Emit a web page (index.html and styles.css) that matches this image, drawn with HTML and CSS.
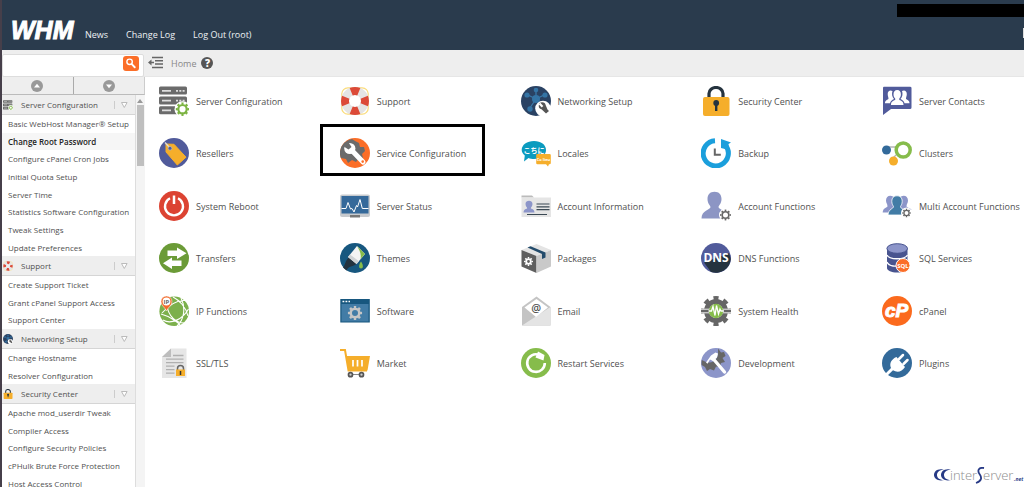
FILE: index.html
```html
<!DOCTYPE html>
<html lang="en">
<head>
<meta charset="utf-8">
<title>WHM</title>
<link rel="stylesheet" href="styles.css">
</head>
<body>
<header class="masthead">
  <svg class="logo" viewBox="0 0 70 28" role="img" aria-label="WHM"><text class="logo-text" x="1" y="23">WHM</text></svg>
  <nav class="topnav">
    <a href="#">News</a>
    <a href="#">Change Log</a>
    <a href="#">Log Out (root)</a>
  </nav>
  <div class="redacted"></div>
  <div class="edge-box"></div>
</header>
<div class="toolbar">
  <form class="search">
    <input class="search-input" type="text" aria-label="Search">
    <button class="search-button" type="button" aria-label="Find">
      <svg viewBox="0 0 16 16"><circle cx="6.5" cy="6.2" r="2.9" fill="none" stroke="#fff" stroke-width="1.5"/><path d="M8.8 8.6 12 12" stroke="#fff" stroke-width="2" stroke-linecap="round"/></svg>
    </button>
  </form>
  <button class="collapse" type="button" aria-label="Collapse menu">
    <svg viewBox="0 0 16 14"><path d="M4 1.500H15M7 4.800H15M7 8.100H15M4 11.500H15" stroke="#666" stroke-width="1.500"/><path d="M0 6.500 3.500 3.500V5.700H6V7.300H3.500V9.500Z" fill="#666"/></svg>
  </button>
  <a class="crumb" href="#">Home</a>
  <button class="help" type="button" aria-label="Help">?</button>
</div>
<div class="body">
  <aside class="sidebar">
    <div class="steppers">
      <button type="button" aria-label="Previous"><svg viewBox="0 0 12 12"><circle cx="6" cy="6" r="6" fill="#999"/><path d="M3 7.5 6 3.8 9 7.5Z" fill="#fff"/></svg></button>
      <button type="button" aria-label="Next"><svg viewBox="0 0 12 12"><circle cx="6" cy="6" r="6" fill="#999"/><path d="M3 4.5 6 8.2 9 4.5Z" fill="#fff"/></svg></button>
    </div>
    <div class="menu-wrap">
      <nav class="menu">
        <h2><svg class="mini" viewBox="0 0 30 30"><use href="#i-server"/></svg><span>Server Configuration</span><svg class="chev" viewBox="0 0 8 8"><path d="M1 1.5 3.8 6.5 6.6 1.5Z"/></svg></h2>
        <ul>
          <li><a href="#">Basic WebHost Manager® Setup</a></li>
          <li class="current"><a href="#">Change Root Password</a></li>
          <li><a href="#">Configure cPanel Cron Jobs</a></li>
          <li><a href="#">Initial Quota Setup</a></li>
          <li><a href="#">Server Time</a></li>
          <li><a href="#">Statistics Software Configuration</a></li>
          <li><a href="#">Tweak Settings</a></li>
          <li><a href="#">Update Preferences</a></li>
        </ul>
        <h2><svg class="mini" viewBox="0 0 30 30"><use href="#i-support"/></svg><span>Support</span><svg class="chev" viewBox="0 0 8 8"><path d="M1 1.5 3.8 6.5 6.6 1.5Z"/></svg></h2>
        <ul>
          <li><a href="#">Create Support Ticket</a></li>
          <li><a href="#">Grant cPanel Support Access</a></li>
          <li><a href="#">Support Center</a></li>
        </ul>
        <h2><svg class="mini" viewBox="0 0 30 30"><use href="#i-network"/></svg><span>Networking Setup</span><svg class="chev" viewBox="0 0 8 8"><path d="M1 1.5 3.8 6.5 6.6 1.5Z"/></svg></h2>
        <ul>
          <li><a href="#">Change Hostname</a></li>
          <li><a href="#">Resolver Configuration</a></li>
        </ul>
        <h2><svg class="mini" viewBox="0 0 30 30"><use href="#i-lock"/></svg><span>Security Center</span><svg class="chev" viewBox="0 0 8 8"><path d="M1 1.5 3.8 6.5 6.6 1.5Z"/></svg></h2>
        <ul>
          <li><a href="#">Apache mod_userdir Tweak</a></li>
          <li><a href="#">Compiler Access</a></li>
          <li><a href="#">Configure Security Policies</a></li>
          <li><a href="#">cPHulk Brute Force Protection</a></li>
          <li><a href="#">Host Access Control</a></li>
        </ul>
      </nav>
      <div class="scrollbar"><svg viewBox="0 0 6 4"><path d="M0 4 3 0 6 4Z" fill="#999"/></svg><div class="thumb"></div></div>
    </div>
  </aside>
  <main class="grid">
    <a class="item" href="#"><svg viewBox="0 0 30 30">
      <g id="i-server"><g fill="#6b6b6b"><rect x="0" y=".5" width="28" height="8" rx="1.5"/><rect x="0" y="10.5" width="28" height="8" rx="1.5"/><rect x="0" y="20.2" width="28" height="8" rx="1.5"/></g>
      <path d="M3 4.8H12M3 14.6H12M3 24.3H12" stroke="#ddd" stroke-width="1.7"/><path d="M17 4.8H26M17 14.6H26" stroke="#ddd" stroke-width="1.7" stroke-dasharray="2 1.3"/>
      <circle cx="23.5" cy="23.2" r="8" fill="#fff"/><circle cx="23.5" cy="23.2" r="4.2" fill="none" stroke="#7cb342" stroke-width="2.2"/><circle cx="23.5" cy="23.2" r="5.7" fill="none" stroke="#7cb342" stroke-width="2" pathLength="16" stroke-dasharray="1 1" stroke-dashoffset=".5"/></g></svg><span>Server Configuration</span></a>
    <a class="item" href="#"><svg viewBox="0 0 30 30">
      <g id="i-support"><rect x="1.8" y="1.8" width="26.4" height="26.4" rx="6" fill="none" stroke="#fadc7a" stroke-width="1.2"/><circle cx="15" cy="15" r="10" fill="none" stroke="#e4e4e4" stroke-width="8"/><circle cx="15" cy="15" r="10" fill="none" stroke="#dc4a38" stroke-width="8" pathLength="8" stroke-dasharray="1 1" stroke-dashoffset=".5"/></g></svg><span>Support</span></a>
    <a class="item" href="#"><svg viewBox="0 0 30 30">
      <g id="i-network"><circle cx="15" cy="15" r="15" fill="#2a4263"/><path d="M15 13V4.500M15 13 7 9M15 13 23 9M15 13 8.500 22.500M15 13 22 22" stroke="#3a78a8" stroke-width="1.300"/><g fill="#3474a5"><circle cx="15" cy="13" r="4"/><circle cx="15" cy="4" r="2.300"/><circle cx="6" cy="9" r="2.600"/><circle cx="24" cy="9" r="2.600"/><circle cx="9" cy="23" r="2.700"/></g><circle cx="22" cy="22.500" r="7.800" fill="#fff"/><path d="M25 27.500 20.500 23.200A3.500 3.500 0 1 1 24.700 19.200L26.500 23.500 28 25Z" fill="#555"/><path d="M18.500 17.500 21.500 20.700" stroke="#fff" stroke-width="2.200"/></g></svg><span>Networking Setup</span></a>
    <a class="item" href="#"><svg viewBox="0 0 30 30">
      <g id="i-lock"><path d="M8 13V7.500A7 6 0 0 1 22 7.500V13" fill="none" stroke="#25333f" stroke-width="3.200"/><rect x="2" y="11" width="26.500" height="19" rx="2" fill="#f5ae2b"/><circle cx="15.200" cy="17" r="2.900" fill="#25333f"/><path d="M14 17H16.400V25H14Z" fill="#25333f"/></g></svg><span>Security Center</span></a>
    <a class="item" href="#"><svg viewBox="0 0 30 30">
      <path d="M2 .7H28Q29.500.7 29.500 2V21.500Q29.500 23 28 23H9L1 29V2Q1 .7 2 .7Z" fill="#515b9b"/>
      <g fill="#fff"><path d="M11.500 8.500C11.500 5.600 12.800 4 15.200 4S18.900 5.600 18.900 8.500C18.900 10.500 18 11.700 17.300 12.500V14C20 15 21.500 15.800 21.500 19H9C9 15.800 10.500 15 13.200 14V12.500C12.300 11.700 11.500 10.500 11.500 8.500Z"/><path d="M10.500 5C8 3.500 5.700 5 5.700 8 5.700 10 6.500 11.300 6.500 13 5 14 3 14.300 3 17.300H8C8.500 15 10 14 12 13 10 11 9.500 7.500 10.500 5ZM20 5C22.500 3.500 24.800 5 24.800 8 24.800 10 24 11.300 24 13 25.500 14 27.500 14.300 27.500 17.300H22.500C22 15 20.500 14 18.500 13 20.500 11 21 7.500 20 5Z"/></g></svg><span>Server Contacts</span></a>

    <a class="item" href="#"><svg viewBox="0 0 30 30">
      <circle cx="15" cy="15" r="15" fill="#515b9b"/><path d="M7 6 15 6.300 27 19.200 18.300 27 7 14Z" fill="#f5ae2b" stroke="#f5ae2b" stroke-linejoin="round"/><path d="M6 4.500 11 10" stroke="#ddd" stroke-width="1.300"/><circle cx="11" cy="10.300" r="1.900" fill="#515b9b" stroke="#bbb" stroke-width=".7"/></svg><span>Resellers</span></a>
    <a class="item highlight" href="#"><svg viewBox="0 0 30 30">
      <circle cx="15" cy="15" r="15" fill="#fb6e28"/><path d="M4 5A15 15 0 0 1 12 1L15 3 19 5 20 9 24 9 25 13 22 16 23 20 19 20 16 24 12 22 8 25 6 21 .8 20A15 15 0 0 1 4 5Z" fill="#6b6b6b"/><path d="M9.500 10 23 24" stroke="#fff" stroke-width="5" stroke-linecap="round"/><circle cx="9.800" cy="10.500" r="5.600" fill="#fff"/><path d="M3 8 8 3.500 11.500 9 8.500 11.500Z" fill="#6b6b6b"/><circle cx="22.700" cy="23.600" r="1.300" fill="#fb6e28"/></svg><span>Service Configuration</span></a>
    <a class="item" href="#"><svg viewBox="0 0 30 30">
      <path d="M13 3C20 3 25 6.800 25 12S20 21 13 21C11 21 9 20.800 7.500 20L3 23.500 3.800 17.500C2 16 .7 14 .7 12 .7 6.800 6 3 13 3Z" fill="#0b9bbf"/><text x="13" y="15" text-anchor="middle" class="jp">こちに</text><path d="M16 16H28.500Q29.800 16 29.800 17.200V25Q29.800 26.200 28.500 26.200H28L27 28.500 25 26.200H16.500Q15.200 26.200 15.200 25V17.200Q15.200 16 16 16Z" fill="#f5ae2b"/><text x="22.500" y="23" text-anchor="middle" class="tiny">Co lieu</text></svg><span>Locales</span></a>
    <a class="item" href="#"><svg viewBox="0 0 30 30">
      <path d="M14 2.700A12.600 12.600 0 1 0 24.500 7.300" fill="none" stroke="#1b9fdc" stroke-width="5"/><path d="M20 1 30 4.500 27.500 6 28 12 20 10Z" fill="#1b9fdc"/><path d="M13.800 10.500V16.800H19.800" fill="none" stroke="#666" stroke-width="2"/></svg><span>Backup</span></a>
    <a class="item" href="#"><svg viewBox="0 0 30 30">
      <path d="M5 9H15M11 20 17 14" stroke="#b5b5b5" stroke-width="1.300"/><circle cx="4.500" cy="12" r="4.500" fill="#336a9a"/><circle cx="11.500" cy="23" r="4.500" fill="#f5ae2b"/><circle cx="21.200" cy="12" r="7" fill="#fff" stroke="#86bc4b" stroke-width="3.500"/></svg><span>Clusters</span></a>

    <a class="item" href="#"><svg viewBox="0 0 30 30">
      <circle cx="15" cy="15" r="15" fill="#dc4332"/><path d="M11 7.300A9 9 0 1 0 19 7.300" fill="none" stroke="#fff" stroke-width="2.300"/><path d="M15 4.500V13" stroke="#fff" stroke-width="2.500"/></svg><span>System Reboot</span></a>
    <a class="item" href="#"><svg viewBox="0 0 30 30">
      <rect y="3.500" width="30" height="22.500" rx="2" fill="#c7cace"/><rect x="1.500" y="5" width="27" height="17.500" fill="#35699a"/><path d="M10 24H20V26.500H10Z" fill="#777"/><path d="M1.500 17.500H6L8 11.500 10.500 18 12 17.500 14 21 16.500 14.500 17.500 16 20 8.500 22.300 17.500H28.500" fill="none" stroke="#fff" stroke-width="1"/></svg><span>Server Status</span></a>
    <a class="item" href="#"><svg viewBox="0 0 30 30">
      <path d="M.5 4.500H11L13 6.500H.5Z" fill="#bbb"/><path d="M.5 6.500H30V26H.5Z" fill="#e5e5e5"/><path d="M4.500 13C4.500 8.700 11.500 8.700 11.500 13 11.500 15.500 9.800 16 9.800 17.500 12 18 13.500 19 13.500 21.500H2.500C2.500 19 4 18 6.200 17.500 6.200 16 4.500 15.500 4.500 13Z" fill="#8c95c9"/><path d="M15.500 13H28.500M15.500 15.800H28.500M15.500 18.700H28.500M6 23.500H26" stroke="#3b4954" stroke-width="1.200"/></svg><span>Account Information</span></a>
    <a class="item" href="#"><svg viewBox="0 0 30 30">
      <path d="M6.500 8C6.500 3.500 9 .7 13.500.7S20.500 3.500 20.500 8C20.500 12.500 18 14 17.500 16 17.500 19 27 19 27 27.500H.5C.5 19 9.500 19 9.500 16 9 14 6.500 12.500 6.500 8Z" fill="#8c95c4"/><circle cx="24.500" cy="24" r="6.500" fill="#fff"/><circle cx="24.500" cy="24" r="3.300" fill="none" stroke="#666" stroke-width="1.600"/><circle cx="24.500" cy="24" r="4.700" fill="none" stroke="#666" stroke-width="1.400" pathLength="16" stroke-dasharray="1 1" stroke-dashoffset=".5"/></svg><span>Account Functions</span></a>
    <a class="item" href="#"><svg viewBox="0 0 30 30">
      <path d="M11 5.500C7.500 3.500 4 5.500 4 9.500 4 12 5.500 13 5.500 15.500 3 17.500 1 17.500.7 21.500H8L13 16ZM19 5.500C22.500 3.500 26 5.500 26 9.500 26 12 24.500 13 24.500 15.500 27 17.500 29 17.500 29.500 19H22L17 16Z" fill="#8c95c9"/><path d="M9.800 10.500C9.800 6.500 12 4.800 15 4.800S20.200 6.500 20.200 10.500C20.200 13 19 14.500 18.500 15.500 18.500 18 23 17.500 23.500 24H6C6.500 17.500 11.500 18 11.500 15.500 11 14.500 9.800 13 9.800 10.500Z" fill="#427ca6" stroke="#fff" stroke-width=".8"/><circle cx="24.500" cy="22" r="5.500" fill="#fff"/><circle cx="24.500" cy="22" r="2.600" fill="none" stroke="#666" stroke-width="1.300"/><circle cx="24.500" cy="22" r="3.700" fill="none" stroke="#666" stroke-width="1.200" pathLength="16" stroke-dasharray="1 1" stroke-dashoffset=".5"/></svg><span>Multi Account Functions</span></a>

    <a class="item" href="#"><svg viewBox="0 0 30 30">
      <circle cx="15" cy="15" r="15" fill="#6b9b37"/><path d="M8.500 7.500H18V4.500L27.500 10.300 18 16V13H8.500ZM22.500 17.500H13V14.500L4 20.300 13 26V23H22.500Z" fill="#fff"/></svg><span>Transfers</span></a>
    <a class="item" href="#"><svg viewBox="0 0 30 30">
      <circle cx="15" cy="15" r="15" fill="#17577f"/><path d="M3 24.500C5.500 22 5 17.500 9 14.500L16.500 20.500C14.500 24 9 22 6.500 27.500Z" fill="#25333f"/><path d="M17 3 8 14 16.500 21 25 11Z" fill="#f4f4f4"/><path d="M8 14 10 11.500 19 18.200 16.500 21Z" fill="#d0d3d5"/><path d="M17 3 25 11 20.500 16C21.500 11 19.500 7 17 3Z" fill="#86bc4b"/><path d="M21 18.500C23.500 22 23.500 25.500 21 25.500S18.500 22 21 18.500Z" fill="#86bc4b"/></svg><span>Themes</span></a>
    <a class="item" href="#"><svg viewBox="0 0 30 30">
      <path d="M.5 7 15.500 1 30 7 15.500 13Z" fill="#e4e4e4"/><path d="M.5 7 15.500 13V30L.5 23.500Z" fill="#5f5f5f"/><path d="M30 7 15.500 13V30L30 23.500Z" fill="#c9c9c9"/><path d="M6.500 4.500 9.500 3.300 24.500 9.500V14.500L21 16V11Z" fill="#234b6b"/><circle cx="7.500" cy="18.500" r="2.300" fill="none" stroke="#fff" stroke-width="1.800"/><circle cx="7.500" cy="18.500" r="3.700" fill="none" stroke="#fff" stroke-width="1.600" pathLength="16" stroke-dasharray="1 1" stroke-dashoffset=".5"/></svg><span>Packages</span></a>
    <a class="item" href="#"><svg viewBox="0 0 30 30">
      <circle cx="15" cy="15" r="15" fill="#515b9b"/><path d="M3 19.500 28 10 29.800 16A15 15 0 0 1 10 29Z" fill="#25333f"/><text x="15" y="19" text-anchor="middle" class="dns">DNS</text></svg><span>DNS Functions</span></a>
    <a class="item" href="#"><svg viewBox="0 0 30 30">
      <path d="M5 5V25C5 27.500 9.500 29.500 15 29.500S25.500 27.500 25.500 25V5Z" fill="#48548f"/><ellipse cx="15.200" cy="5.500" rx="10.300" ry="4.800" fill="#8c95c9" stroke="#48548f"/><path d="M5 12C7 17 23 17 25.500 12M5 19C7 24 15 23.500 17 22.500" fill="none" stroke="#fff" stroke-width="1.300"/><circle cx="21" cy="22.500" r="7" fill="#fb6e28" stroke="#fff"/><text x="21" y="24.700" text-anchor="middle" class="sql">SQL</text></svg><span>SQL Services</span></a>

    <a class="item" href="#"><svg viewBox="0 0 30 30">
      <circle cx="15.200" cy="15.200" r="14.800" fill="#7cb04c"/><path d="M3 17C10 9 18 4 26 4.500M4 24C12 29 24 23 29.500 13M22 2C27 12 25 24 18 30M8 9C9 20 17 27 25 27M14 1C20 4 27 11 29 20M2 18C10 20 20 27 21 29" fill="none" stroke="#fff" stroke-width="1.100"/><path d="M7.500 15C6 11.500 2 9.500 2 5.500A5.500 5.500 0 0 1 13 5.500C13 9.500 9 11.500 7.500 15Z" fill="#f26b2c" stroke="#fff" stroke-width=".5"/><circle cx="7.500" cy="5.500" r="3.900" fill="#fff"/><text x="7.500" y="7.700" text-anchor="middle" class="ip">IP</text></svg><span>IP Functions</span></a>
    <a class="item" href="#"><svg viewBox="0 0 30 30">
      <rect x=".3" y="3" width="29.500" height="23.500" fill="#17577f"/><rect x="1.500" y="8" width="27" height="17.500" fill="#427ca6"/><path d="M2.500 5.500H10" stroke="#fff" stroke-width="1.700" stroke-dasharray="1.800 1.200"/><circle cx="15" cy="17" r="4.300" fill="none" stroke="#c6c6c6" stroke-width="2.600"/><circle cx="15" cy="17" r="6" fill="none" stroke="#c6c6c6" stroke-width="2.200" pathLength="16" stroke-dasharray="1 1" stroke-dashoffset=".5"/></svg><span>Software</span></a>
    <a class="item" href="#"><svg viewBox="0 0 30 30">
      <path d="M1 11 15.500.5 29.500 11V29.500H1Z" fill="#c4c4c4"/><path d="M29.500 11 1 29.500H29.500Z" fill="#e4e4e4"/><path d="M3.500 11.500 15.500 3 27 11.500 15 21Z" fill="#fff"/><text x="15.300" y="15.500" text-anchor="middle" class="at">@</text></svg><span>Email</span></a>
    <a class="item" href="#"><svg viewBox="0 0 30 30">
      <circle cx="15" cy="15" r="9.500" fill="none" stroke="#666" stroke-width="5"/><circle cx="15" cy="15" r="12.600" fill="none" stroke="#666" stroke-width="4.800" pathLength="16" stroke-dasharray="1 1" stroke-dashoffset=".5"/><path d="M0 13.200H30M0 16.800H30" stroke="#fff" stroke-width=".9"/><circle cx="15" cy="15" r="7.200" fill="#86bc4b"/><path d="M7.500 15H10.500L12 10.500 14 19.500 15.500 9.500 17.500 18 19 13 20 15H23" fill="none" stroke="#fff" stroke-width="1.300"/></svg><span>System Health</span></a>
    <a class="item" href="#"><svg viewBox="0 0 30 30">
      <circle cx="15" cy="15" r="15" fill="#fb6a1d"/><text x="14.500" y="21" text-anchor="middle" class="cp">cP</text></svg><span>cPanel</span></a>

    <a class="item" href="#"><svg viewBox="0 0 30 30">
      <path d="M12 .5H27.500V30H3V9Z" fill="#e6e6e6"/><path d="M12 .5V9H3Z" fill="#bdbdbd"/><path d="M14 7.500H24.500M7 11.200H24.500M7 14.700H24.500M7 18.200H15.500M7 21.700H15.500M7 25.200H15.500" stroke="#b0b0b0" stroke-width="1.300"/><path d="M18.500 22V20.500A3 3 0 0 1 24.500 20.500V22" fill="none" stroke="#666" stroke-width="1.500"/><rect x="17" y="21.500" width="9" height="6.500" fill="#f5ae2b"/><path d="M21.500 23V27" stroke="#333" stroke-width="1.500"/></svg><span>SSL/TLS</span></a>
    <a class="item" href="#"><svg viewBox="0 0 30 30">
      <path d="M0 2H5L8.500 22.500H27" fill="none" stroke="#f5ae2b" stroke-width="2"/><path d="M6 8H30L27.500 22.500H8.500Z" fill="#f5ae2b"/><path d="M13 12V18.500M17.500 12V18.500M22 12V18.500" stroke="#fff" stroke-width="1.700"/><path d="M10.500 26.500H22" stroke="#888" stroke-width="1"/><g fill="#ccc" stroke="#555" stroke-width="1.700"><circle cx="10.500" cy="26.700" r="2"/><circle cx="21.500" cy="26.700" r="2"/></g></svg><span>Market</span></a>
    <a class="item" href="#"><svg viewBox="0 0 30 30">
      <circle cx="15" cy="15" r="15" fill="#86bc4b"/><path d="M18 6.800A8.800 8.800 0 1 0 23.800 15" fill="none" stroke="#fff" stroke-width="2.600"/><path d="M17 3.500 23.500 7 22.500 12.500 14.500 9.500Z" fill="#fff"/></svg><span>Restart Services</span></a>
    <a class="item" href="#"><svg viewBox="0 0 30 30">
      <circle cx="15" cy="15" r="15" fill="#8c95c9"/><path d="M17 .5 20 4.500 23 4 24.500 8 21.500 10 24 14 20 15 19 19 15 18.500 13 22.500 9 21 6 23 4 19 .6 17A15 15 0 0 1 .8 12L5 14A9 9 0 0 0 17 6Z" fill="#666"/><path d="M12 10.500 23.500 24" stroke="#fff" stroke-width="3.400" stroke-linecap="round"/><path d="M5 14.500 10 7.500 14.500 4.500 17 5.500 16 9.500 12 13 9 11.500 6.500 15.800Z" fill="#fff"/></svg><span>Development</span></a>
    <a class="item" href="#"><svg viewBox="0 0 30 30">
      <circle cx="15" cy="15" r="15" fill="#336a9a"/><path d="M3 26 9 20C7 15.500 9.500 11 14.500 9L23 19C20 24 15 25 11 22.300L5 28Z" fill="#fff"/><path d="M17 11 21 7M21.500 16 25.500 12" stroke="#fff" stroke-width="2.500" stroke-linecap="round"/></svg><span>Plugins</span></a>
    <svg class="brand" viewBox="0 0 90 20" role="img" aria-label="interServer.net"><g fill="#273a86"><path d="M10 2.500C3 1 0 4.500 0 8S4 14.500 10 13C5 13 3 10.500 3 8S5 3 10 2.500Z"/><path d="M17 2.500C10 1 7 4.500 7 8S11 14.500 17 13C12 13 10 10.500 10 8S12 3 17 2.500Z"/></g><text x="16" y="13" class="brand-text">inter</text><path d="M50 1C45 0 43 3.500 45.500 7 48 10.500 48 14 42 16" fill="none" stroke="#273a86" stroke-width="1.800"/><text x="49" y="13" class="brand-text">erver</text><text x="80" y="14" class="brand-net">.net</text></svg>
  </main>
</div>
</body>
</html>
```

FILE: styles.css
```css
*, *::after { box-sizing: border-box; }
body {
  margin: 0;
  height: 100vh;
  display: flex;
  flex-direction: column;
  overflow: hidden;
  background: #fff;
  border-left: 2px solid #463f4a;
  font-family: "Open Sans", sans-serif;
  color: #505050;
}
a { color: inherit; text-decoration: none; }
button { border: 0; padding: 0; background: none; font-family: inherit; }
svg { display: block; flex: none; }

.masthead {
  position: relative;
  flex: none;
  display: flex;
  align-items: flex-end;
  gap: 5px;
  height: 50px;
  padding: 0 0 6px 8px;
  background: #2a3b4d;
}
.logo { width: 70px; height: 28px; overflow: visible; }
.logo-text { font: italic bold 25px "Liberation Sans", sans-serif; fill: #fff; stroke: #fff; stroke-width: 1px; }
.topnav { display: flex; gap: 18px; padding-bottom: 3px; font-size: 9px; line-height: 12px; color: #eef1f4; }
.redacted { position: absolute; top: 4px; right: 0; width: 127px; height: 13px; background: #000; }
.edge-box { position: absolute; top: 28px; right: 0; width: 1px; height: 10px; background: #ddd; }

.toolbar {
  flex: none;
  display: flex;
  align-items: center;
  height: 27px;
  background: #eee;
  border-bottom: 1px solid #e6e6e6;
}
.search { position: relative; width: 142px; height: 23px; }
.search-input { width: 100%; height: 100%; border: 1px solid #ddd; border-radius: 2px; background: #fff; padding: 0 24px 0 4px; font-size: 9px; }
.search-button { position: absolute; top: 4px; right: 5px; width: 16px; height: 15px; border-radius: 3px; background: #fb6e28; }
.search-button svg { width: 16px; height: 15px; }
.collapse { margin-left: 4px; }
.collapse svg { width: 16px; height: 14px; }
.crumb { margin: 0 5px 0 7px; font-size: 9px; color: #888; }
.help { width: 12px; height: 12px; border-radius: 50%; background: #555; color: #fff; font-size: 10px; font-weight: 800; line-height: 12px; }

.body { flex: 1; min-height: 0; display: flex; }
.sidebar { flex: none; width: 143px; display: flex; flex-direction: column; overflow: hidden; }
.steppers { display: flex; height: 18px; flex: none; background: #eee; border-bottom: 1px solid #bbb; border-right: 1px solid #ccc; }
.steppers button { flex: 1; display: flex; align-items: center; justify-content: center; }
.steppers button + button { border-left: 1px solid #aaa; }
.steppers svg { width: 12px; height: 12px; }
.menu-wrap { flex: 1; min-height: 0; display: flex; }
.menu { flex: 1; min-width: 0; overflow: hidden; font-size: 8px; }
.menu h2 {
  display: flex;
  align-items: center;
  gap: 8px;
  height: 20px;
  margin: 0;
  padding: 0 5px 0 1px;
  background: #eee;
  border-bottom: 1px solid #d5d5d5;
  font-size: 8px;
  font-weight: 400;
}
.menu h2 span { flex: 1; white-space: nowrap; }
.mini { width: 10px; height: 10px; }
.chev { width: 16px; height: 8px; border-left: 1px solid #ccc; padding-left: 4px; }
.chev path { fill: #fff; stroke: #bbb; stroke-width: 1; }
.menu ul { list-style: none; margin: 0; padding: 0; }
.menu li { height: 18px; padding-left: 6px; line-height: 18px; white-space: nowrap; }
.menu li:nth-child(3n+2) { height: 17px; line-height: 17px; }
.menu .current { background: #f6f6f6; color: #222; font-weight: 600; }
.scrollbar { flex: none; width: 10px; padding: 4px 1px 0; background: #f4f4f4; border-left: 1px solid #ddd; }
.scrollbar svg { width: 6px; height: 4px; }
.thumb { height: 61px; margin-top: 2px; background: #bfbfbf; }

.grid {
  position: relative;
  flex: 1;
  min-width: 0;
  display: grid;
  grid-template-columns: repeat(4, 1fr) 142px;
  grid-template-rows: repeat(3, 52px 53px);
  align-items: start;
  padding: 9px 0 0 14px;
  font-size: 9px;
}
.item { position: relative; display: flex; align-items: center; gap: 7px; height: 30px; white-space: nowrap; }
.item svg { width: 30px; height: 30px; }
.highlight::after { content: ""; position: absolute; top: -14px; left: -20px; width: 165px; height: 52px; border: 3px solid #000; }
.jp { font: bold 7px "Noto Sans CJK JP", sans-serif; fill: #fff; }
.tiny { font: bold 4px "Open Sans", sans-serif; fill: #fff; }
.dns { font: bold 12px "Open Sans", sans-serif; fill: #fff; }
.sql { font: bold 6px "Open Sans", sans-serif; fill: #fff; }
.ip { font: bold 6px "Open Sans", sans-serif; fill: #666; }
.at { font: 600 11px "Open Sans", sans-serif; fill: #555; }
.cp { font: italic bold 19px "Liberation Sans", sans-serif; fill: #fff; stroke: #fff; stroke-width: 1px; }
.brand { position: absolute; right: 0; bottom: 0; width: 90px; height: 20px; }
.brand-text { font: 300 13px "Open Sans", sans-serif; fill: #8d8d8d; }
.brand-net { font: italic bold 5px "Open Sans", sans-serif; fill: #273a86; }
```
